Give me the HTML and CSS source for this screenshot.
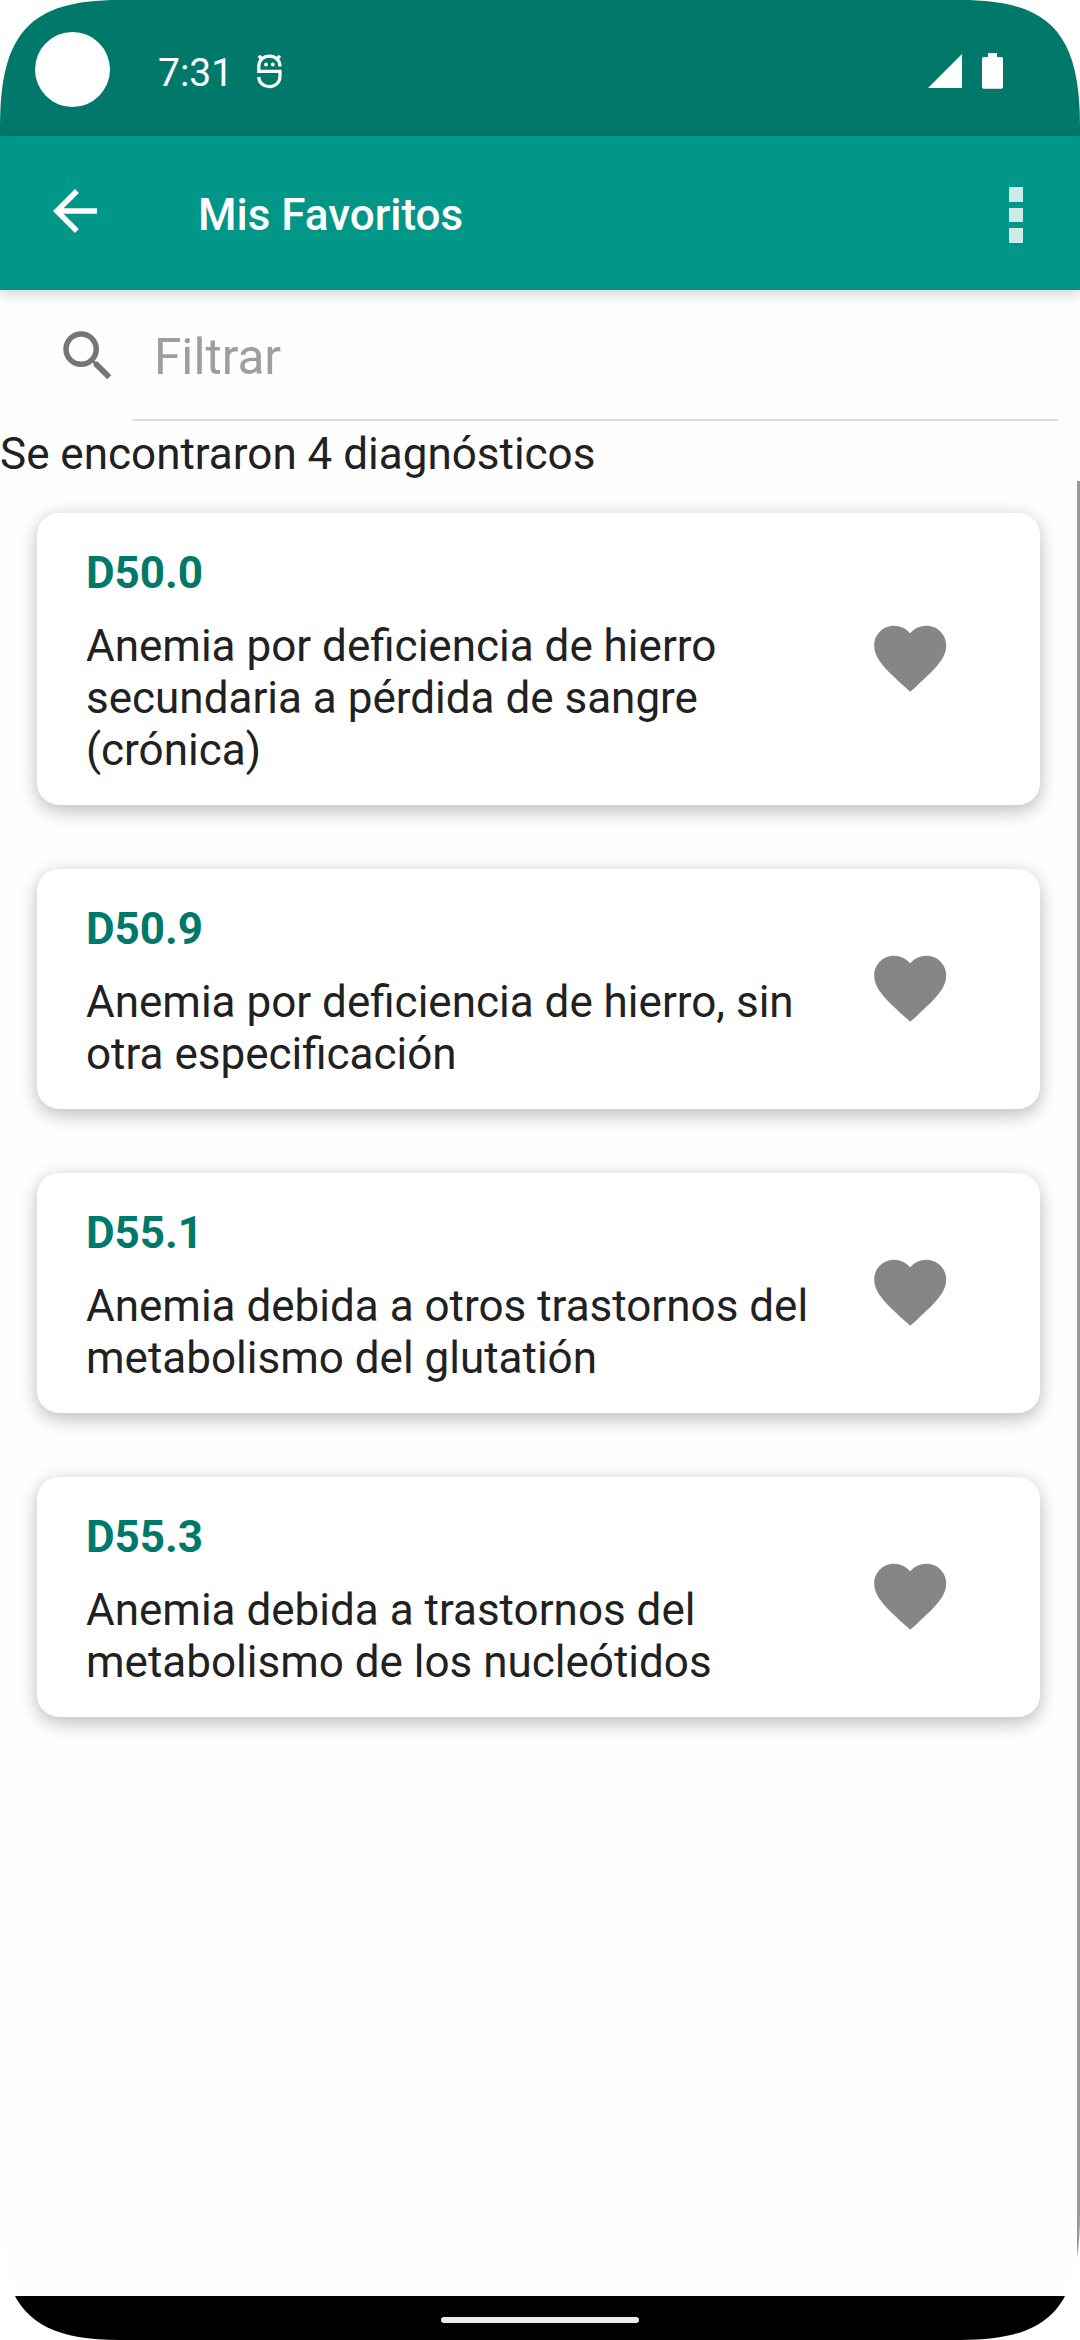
FILE: index.html
```html
<!DOCTYPE html>
<html lang="es">
<head>
<meta charset="utf-8">
<title>Mis Favoritos</title>
<link rel="stylesheet" href="styles.css">
</head>
<body>
<div class="screen">
  <header class="status-bar">
    <span class="camera"></span>
    <span class="clock">7:31</span>
    <svg class="debug-icon" viewBox="0 0 26 36" fill="none" stroke="#fff" stroke-width="3.2">
      <path d="M23 12.5C23 5.5 18 2.2 12.4 2.2S1.8 5.5 1.8 12.5V17.3H23V22C23 29 18 32.6 12.4 32.6S1.8 29 1.8 23"/>
      <path d="M1.8 1.8L5.2 5.2M23 1.8L19.6 5.2"/>
      <circle cx="9" cy="10.5" r="1.9" fill="#fff" stroke="none"/>
      <circle cx="15.8" cy="10.5" r="1.9" fill="#fff" stroke="none"/>
    </svg>
    <svg class="signal-icon" viewBox="0 0 34 34"><path fill="#fff" d="M0 34L34 0V34Z"/></svg>
    <svg class="battery-icon" viewBox="0 0 21 36"><path fill="#fff" d="M6 0H15V4H19.3Q21 4 21 5.7V34Q21 35.7 19.3 35.7H1.7Q0 35.7 0 34V5.7Q0 4 1.7 4H6Z"/></svg>
  </header>

  <nav class="app-bar">
    <svg class="back-icon" viewBox="0 0 24 24"><path fill="#fff" d="M20 11H7.83l5.59-5.59L12 4l-8 8 8 8 1.41-1.41L7.83 13H20v-2z"/></svg>
    <h1 class="title">Mis Favoritos</h1>
    <div class="overflow"><i></i><i></i><i></i></div>
  </nav>

  <main class="content">
    <div class="search">
      <svg class="search-icon" viewBox="0 0 24 24"><path fill="#757575" d="M15.5 14h-.79l-.28-.27A6.471 6.471 0 0 0 16 9.5 6.5 6.5 0 1 0 9.5 16c1.61 0 3.09-.59 4.23-1.57l.27.28v.79l5 4.99L20.49 19l-4.99-5zm-6 0C7.01 14 5 11.99 5 9.5S7.01 5 9.5 5 14 7.01 14 9.5 11.99 14 9.5 14z"/></svg>
      <div class="search-field">Filtrar</div>
    </div>
    <p class="count">Se encontraron 4 diagnósticos</p>
    <section class="list">
      <article class="card">
        <div class="info">
          <h2 class="code">D50.0</h2>
          <p class="name">Anemia por deficiencia de hierro<br>secundaria a pérdida de sangre<br>(crónica)</p>
        </div>
        <svg class="heart" viewBox="0 0 24 24"><path d="M12 21.35l-1.45-1.32C5.4 15.36 2 12.28 2 8.5 2 5.42 4.42 3 7.5 3c1.74 0 3.41.81 4.5 2.09C13.09 3.81 14.76 3 16.5 3 19.58 3 22 5.42 22 8.5c0 3.78-3.4 6.86-8.55 11.54L12 21.35z"/></svg>
      </article>
      <article class="card">
        <div class="info">
          <h2 class="code">D50.9</h2>
          <p class="name">Anemia por deficiencia de hierro, sin<br>otra especificación</p>
        </div>
        <svg class="heart" viewBox="0 0 24 24"><path d="M12 21.35l-1.45-1.32C5.4 15.36 2 12.28 2 8.5 2 5.42 4.42 3 7.5 3c1.74 0 3.41.81 4.5 2.09C13.09 3.81 14.76 3 16.5 3 19.58 3 22 5.42 22 8.5c0 3.78-3.4 6.86-8.55 11.54L12 21.35z"/></svg>
      </article>
      <article class="card">
        <div class="info">
          <h2 class="code">D55.1</h2>
          <p class="name">Anemia debida a otros trastornos del<br>metabolismo del glutatión</p>
        </div>
        <svg class="heart" viewBox="0 0 24 24"><path d="M12 21.35l-1.45-1.32C5.4 15.36 2 12.28 2 8.5 2 5.42 4.42 3 7.5 3c1.74 0 3.41.81 4.5 2.09C13.09 3.81 14.76 3 16.5 3 19.58 3 22 5.42 22 8.5c0 3.78-3.4 6.86-8.55 11.54L12 21.35z"/></svg>
      </article>
      <article class="card">
        <div class="info">
          <h2 class="code">D55.3</h2>
          <p class="name">Anemia debida a trastornos del<br>metabolismo de los nucleótidos</p>
        </div>
        <svg class="heart" viewBox="0 0 24 24"><path d="M12 21.35l-1.45-1.32C5.4 15.36 2 12.28 2 8.5 2 5.42 4.42 3 7.5 3c1.74 0 3.41.81 4.5 2.09C13.09 3.81 14.76 3 16.5 3 19.58 3 22 5.42 22 8.5c0 3.78-3.4 6.86-8.55 11.54L12 21.35z"/></svg>
      </article>
      <span class="scrollbar"></span>
    </section>
  </main>

  <footer class="nav-bar"><span class="handle"></span></footer>
</div>
</body>
</html>
```

FILE: styles.css
```css
* { box-sizing: border-box; }

body {
  margin: 0;
  background: #fff;
  font-family: Roboto, sans-serif;
  color: #212121;
}

h1, h2, p { margin: 0; }
svg { display: block; flex: none; }

/* Rounded display corners */
.screen {
  width: 1080px;
  height: 2340px;
  display: flex;
  flex-direction: column;
  overflow: hidden;
  background: #fefefe;
  clip-path: path("M0 127C0 34 29 0 119 0H961C1051 0 1080 34 1080 127V2213C1080 2306 1051 2340 961 2340H119C29 2340 0 2306 0 2213Z");
}

.status-bar {
  height: 136px;
  flex: none;
  display: flex;
  align-items: flex-start;
  padding: 0 77px 0 35px;
  background: #00796b;
}

.camera {
  width: 75px;
  height: 75px;
  margin-top: 32px;
  border-radius: 50%;
  background: #fff;
}

.clock {
  width: 147px;
  padding-left: 48px;
  margin-top: 50px;
  font-size: 39px;
  line-height: 46px;
  color: #fff;
}

.debug-icon { width: 26px; height: 36px; margin-top: 54px; }
.signal-icon { width: 34px; height: 34px; margin: 53.5px 20px 0 auto; }
.battery-icon { width: 21px; height: 36px; margin-top: 53px; }

.app-bar {
  height: 154px;
  flex: none;
  display: flex;
  align-items: center;
  padding: 0 57px 0 42px;
  background: #009688;
  box-shadow: 0 3px 14px rgba(0, 0, 0, .2);
  z-index: 1;
}

.back-icon { width: 66px; height: 66px; margin-bottom: 4px; }

.title {
  margin: 3px 0 0 90px;
  font-size: 44px;
  line-height: 52px;
  font-weight: 500;
  color: #fff;
}

.overflow {
  display: grid;
  gap: 6px;
  margin: 4px 0 0 auto;
}

.overflow i {
  width: 14.5px;
  height: 14.7px;
  background: #cceae7;
}

.content {
  flex: 1;
  display: flex;
  flex-direction: column;
}

.search {
  display: flex;
  align-items: center;
  height: 131px;
  padding: 0 22px 0 55px;
}

.search-icon { width: 66px; height: 66px; }

.search-field {
  flex: 1;
  height: 131px;
  margin-left: 11px;
  padding: 38px 22px 0;
  border-bottom: 2px solid #dedede;
  font-size: 49.5px;
  line-height: 58px;
  color: #9e9e9e;
}

.count {
  height: 60px;
  padding-top: 7px;
  font-size: 44px;
  line-height: 52px;
}

.list {
  position: relative;
  flex: 1;
  display: flex;
  flex-direction: column;
  gap: 64px;
  padding: 32px 40px 0 37px;
}

.card {
  display: flex;
  align-items: center;
  justify-content: space-between;
  padding: 34px 87px 29px 49px;
  border-radius: 22px;
  background: #fff;
  box-shadow: 0 8px 18px rgba(0, 0, 0, .18), 0 0 18px rgba(0, 0, 0, .1);
}

.code {
  margin-bottom: 21px;
  font-size: 44px;
  line-height: 52px;
  font-weight: 700;
  color: #00796b;
}

.name {
  font-size: 44px;
  line-height: 52px;
}

.heart {
  width: 86.4px;
  height: 86.4px;
  margin-top: -6px;
  fill: #868686;
}

.scrollbar {
  position: absolute;
  top: 0;
  right: 0;
  bottom: 0;
  width: 3px;
  background: #999;
}

.nav-bar {
  height: 44px;
  flex: none;
  display: flex;
  align-items: center;
  justify-content: center;
  background: #000;
}

.handle {
  width: 198px;
  height: 6px;
  margin-top: 4px;
  border-radius: 3px;
  background: #ececec;
}
```
